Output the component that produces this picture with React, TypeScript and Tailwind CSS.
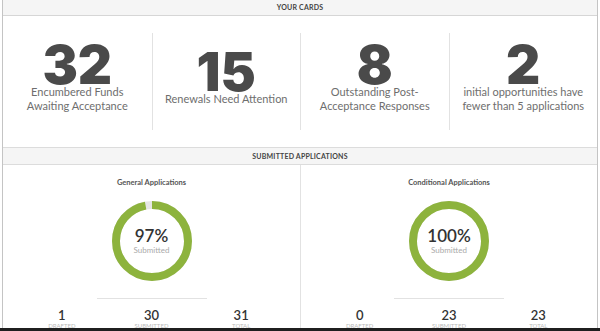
import React from 'react'

const cards = [
  { value: '32', label: ['Encumbered Funds', 'Awaiting Acceptance'] },
  { value: '15', label: ['Renewals Need Attention'] },
  { value: '8', label: ['Outstanding Post-', 'Acceptance Responses'] },
  { value: '2', label: ['initial opportunities have', 'fewer than 5 applications'] },
]

const groups = [
  { title: 'General Applications', percent: 97, drafted: 1, submitted: 30, total: 31 },
  { title: 'Conditional Applications', percent: 100, drafted: 0, submitted: 23, total: 23 },
]

function Donut({ percent }: { percent: number }) {
  const r = 36
  const c = 2 * Math.PI * r
  return (
    <div className="relative w-[80px] h-[80px]">
      <svg width="80" height="80" viewBox="0 0 80 80" className="-rotate-90">
        <circle cx="40" cy="40" r={r} fill="none" stroke="#e6e6e6" strokeWidth="8" />
        <circle
          cx="40"
          cy="40"
          r={r}
          fill="none"
          stroke="#8db33d"
          strokeWidth="8"
          strokeDasharray={`${(c * percent) / 100} ${c}`}
        />
      </svg>
      <div className="absolute inset-0 flex flex-col items-center justify-center pb-[1px]">
        <div className="text-[17px] leading-[18px] font-semibold text-[#333]">{percent}%</div>
        <div className="text-[8px] leading-[10px] text-[#aaa]">Submitted</div>
      </div>
    </div>
  )
}

function SectionHeader({ children }: { children: React.ReactNode }) {
  return (
    <div className="shrink-0 h-[18px] flex items-center justify-center bg-[#f5f5f5] border-y border-[#dcdcdc] text-[7px] font-bold tracking-[0.2px] text-[#444]">
      {children}
    </div>
  )
}

export default function App() {
  return (
    <div
      className="w-[600px] h-[331px] bg-white overflow-hidden flex flex-col"
      style={{ fontFamily: 'Lato, "Open Sans", sans-serif' }}
    >
      <div className="flex-1 min-h-0 ml-[2px] w-[596px] border-x border-[#c4c4c4] flex flex-col overflow-hidden">
        <div className="shrink-0 h-[16px] flex items-center justify-center bg-[#f5f5f5] border-b border-[#d6d6d6] text-[7px] font-bold tracking-[0.2px] text-[#444]">
          YOUR CARDS
        </div>

        <div className="shrink-0 h-[131px] grid grid-cols-4 py-[17px]">
          {cards.map((card, i) => (
            <div
              key={card.value}
              className={`flex flex-col items-center justify-center pb-[6px] ${i > 0 ? 'border-l border-[#e2e2e2]' : ''}`}
            >
              <div
                className="text-[53px] leading-[40px] font-black text-[#4a4a4a]"
                style={{ fontFamily: 'Inter, sans-serif' }}
              >
                {card.value}
              </div>
              <div className="text-[11px] leading-[14px] text-[#6e6e6e] text-center">
                {card.label.map((l) => (
                  <div key={l}>{l}</div>
                ))}
              </div>
            </div>
          ))}
        </div>

        <SectionHeader>SUBMITTED APPLICATIONS</SectionHeader>

        <div className="shrink-0 h-[200px] grid grid-cols-2">
          {groups.map((g, i) => (
            <div
              key={g.title}
              className={`flex flex-col items-center pt-[13px] ${i > 0 ? 'border-l border-[#e2e2e2]' : ''}`}
            >
              <div className="text-[7.5px] leading-[10px] font-bold text-[#555]">{g.title}</div>
              <div className="mt-[13px]">
                <Donut percent={g.percent} />
              </div>
              <div className="mt-[17px] w-[110px] h-[1px] bg-[#e2e2e2]" />
              <div className="mt-[9px] w-full grid grid-cols-3 px-[14px]">
                {[
                  [g.drafted, 'DRAFTED'],
                  [g.submitted, 'SUBMITTED'],
                  [g.total, 'TOTAL'],
                ].map(([n, l]) => (
                  <div key={l as string} className="flex flex-col items-center">
                    <div className="text-[13px] leading-[14px] font-semibold text-[#333]">{n}</div>
                    <div className="text-[6px] leading-[8px] text-[#bbb]">{l}</div>
                  </div>
                ))}
              </div>
            </div>
          ))}
        </div>
      </div>
      <div className="shrink-0 h-[3px] bg-[#1f1f1f]" />
    </div>
  )
}
